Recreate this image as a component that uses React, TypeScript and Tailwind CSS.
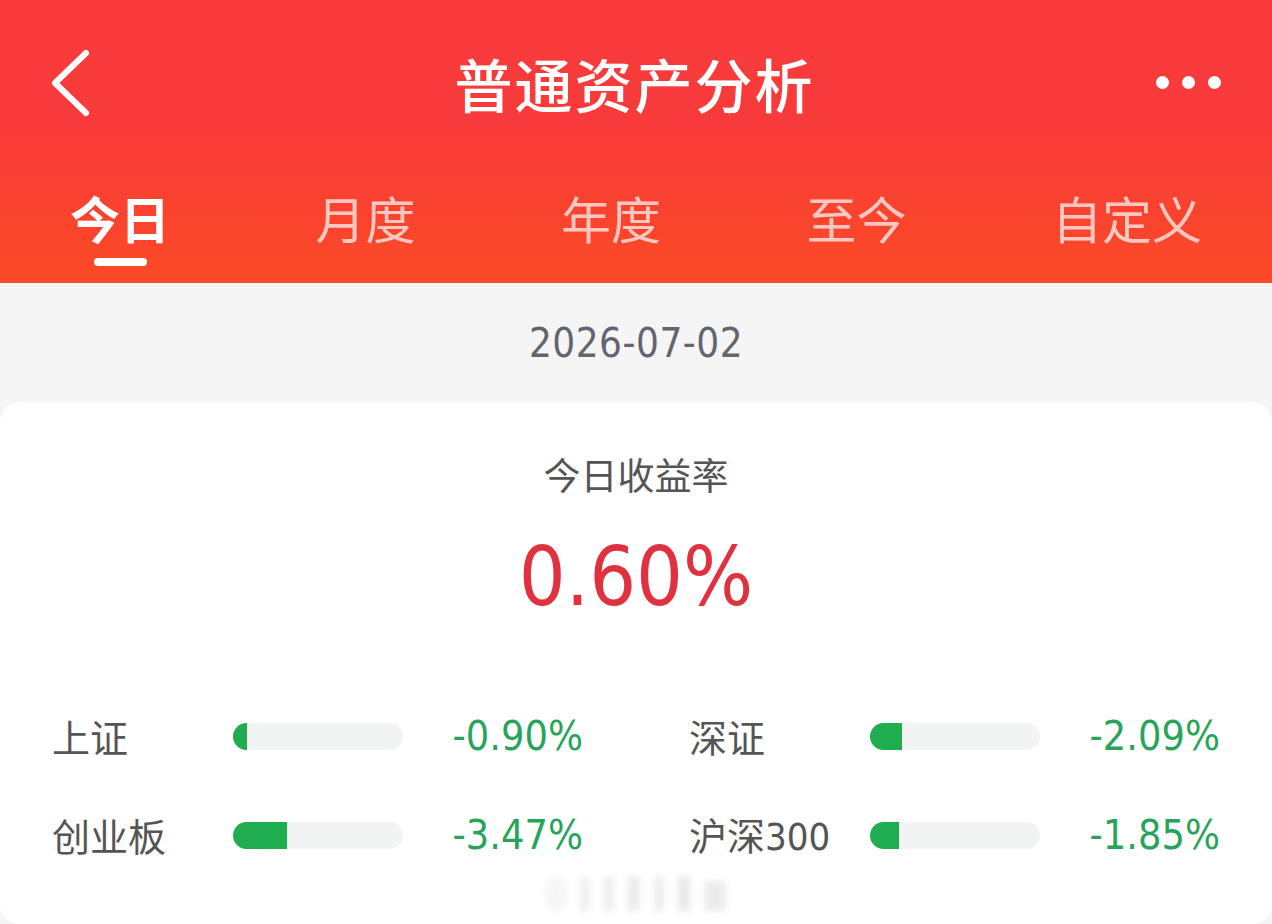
import React from "react";

const cjk = { fontFamily: '"Noto Sans CJK SC", "Noto Sans", sans-serif' };
const num = {
  fontFamily:
    '"Liberation Sans Narrow", "DejaVu Sans Condensed", "Roboto Condensed", "Noto Sans CJK SC", sans-serif',
};

const tabs = ["今日", "月度", "年度", "至今", "自定义"];

const indices = [
  { name: "上证", value: -0.9 },
  { name: "深证", value: -2.09 },
  { name: "创业板", value: -3.47 },
  { name: "沪深300", value: -1.85 },
];

// bar scale: a full track stands for an 11% move
const MAX_PCT = 11;

function IndexRow({ name, value }: { name: string; value: number }) {
  const fill = Math.min(Math.abs(value) / MAX_PCT, 1) * 100;
  const digits = name.match(/\d+/)?.[0];
  return (
    <div className="flex items-center h-[60px]">
      <div className="w-[181px] text-[38px] leading-none text-[#555555] whitespace-nowrap" style={cjk}>
        {name.replace(/\d+/, "")}
        {digits && <span style={num}>{digits}</span>}
      </div>
      <div className="w-[170px] h-[27px] rounded-full bg-[#f2f3f3] overflow-hidden">
        <div className="h-full bg-[#1fad50]" style={{ width: `${fill}%` }} />
      </div>
      <div className="flex-1 text-right text-[41px] leading-none text-[#27a45a]" style={num}>
        {value.toFixed(2)}%
      </div>
    </div>
  );
}

export default function App() {
  return (
    <div className="w-[1272px] h-[924px] bg-[#f5f5f5] overflow-hidden flex flex-col">
      <header className="shrink-0 h-[283px] bg-[linear-gradient(to_bottom,#f73a3b_0%,#f83b3a_45%,#fb4a25_100%)] flex flex-col">
        <div className="h-[165px] flex items-center px-[48px]">
          <div className="flex-1 flex">
            <svg width="48" height="72" viewBox="0 0 48 72" fill="none">
              <path d="M38 6 7 36l31 30" stroke="white" strokeWidth="6" strokeLinecap="round" strokeLinejoin="round" />
            </svg>
          </div>
          <h1 className="text-[58px] leading-none text-white font-medium tracking-[2px]" style={cjk}>
            普通资产分析
          </h1>
          <div className="flex-1 flex items-center gap-[13px] justify-end pr-[3px]">
            <span className="w-[13px] h-[13px] rounded-full bg-white" />
            <span className="w-[13px] h-[13px] rounded-full bg-white" />
            <span className="w-[13px] h-[13px] rounded-full bg-white" />
          </div>
        </div>
        <nav className="flex justify-between px-[70px] pt-[22px]">
          {tabs.map((t, i) => (
            <div key={t} className="flex flex-col items-center">
              <span
                className={`text-[50px] leading-[60px] h-[60px] ${
                  i === 0 ? "text-white font-bold" : "text-white/70"
                }`}
                style={cjk}
              >
                {t}
              </span>
              <span className={`mt-[11px] w-[53px] h-[8px] rounded-full ${i === 0 ? "bg-white" : "bg-transparent"}`} />
            </div>
          ))}
        </nav>
      </header>

      <div className="shrink-0 h-[119px] flex items-center justify-center">
        <span className="text-[40px] leading-none text-[#62646f] tracking-[0.5px]" style={num}>
          2026-07-02
        </span>
      </div>

      <section className="flex-1 bg-white rounded-[20px] flex flex-col items-center pt-[50px]">
        <div className="text-[37px] leading-[44px] text-[#555555]" style={cjk}>
          今日收益率
        </div>
        <div className="mt-[36px] text-[82px] leading-[90px] text-[#e0323e]" style={num}>
          0.60%
        </div>
        <div className="mt-[84px] w-full px-[52px] grid grid-cols-2 gap-x-[106px] gap-y-[39px]">
          {indices.map((d) => (
            <IndexRow key={d.name} name={d.name} value={d.value} />
          ))}
        </div>
        <div className="mt-[10px] flex items-end gap-[14px] blur-[3px] opacity-50">
          <span className="w-[20px] h-[36px] rounded-full bg-[#eeeeee]" />
          <span className="w-[10px] h-[34px] bg-[#e2e2e2]" />
          <span className="w-[10px] h-[34px] bg-[#dddddd]" />
          <span className="w-[12px] h-[34px] bg-[#d8d8d8]" />
          <span className="w-[10px] h-[34px] bg-[#dcdcdc]" />
          <span className="w-[12px] h-[34px] bg-[#d4d4d4]" />
          <span className="w-[22px] h-[30px] bg-[#d9d9d9]" />
        </div>
      </section>
    </div>
  );
}
